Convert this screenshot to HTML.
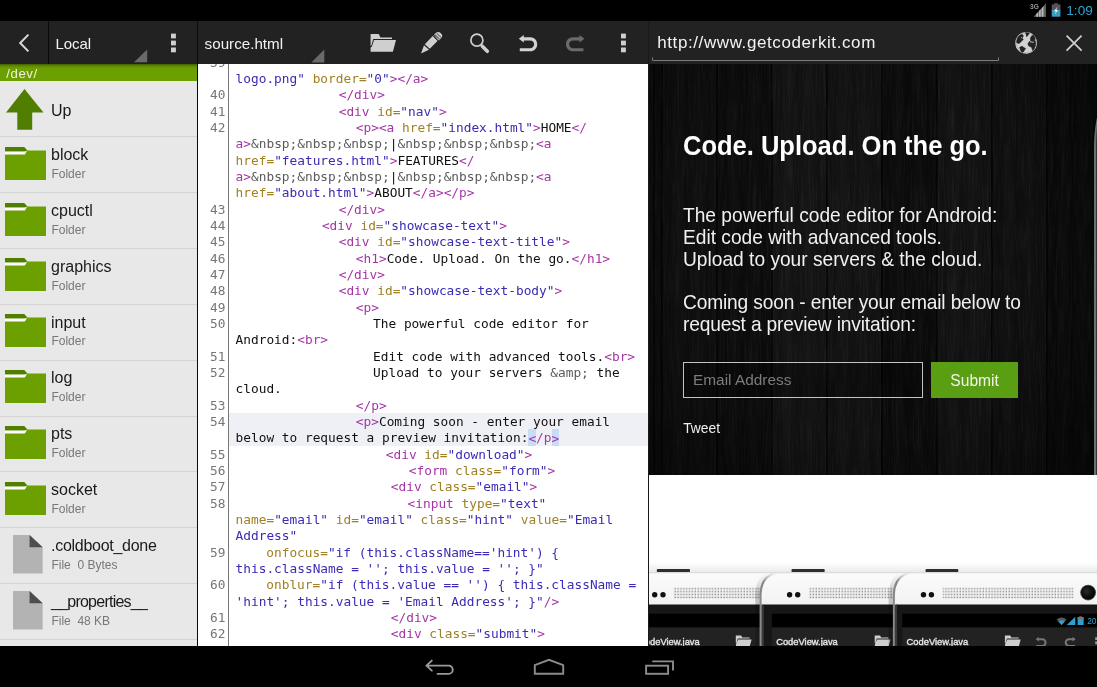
<!DOCTYPE html>
<html lang="en">
<head>
<meta charset="utf-8">
<title>CoderKit</title>
<style>
*{box-sizing:border-box;margin:0;padding:0}
html,body{width:1097px;height:687px;overflow:hidden;background:#000}
body{position:relative;font-family:"Liberation Sans",sans-serif;color:#fff}
.abs{position:absolute}
#status,.bar,#left,#code,#web,#nav{will-change:transform}
#status{position:absolute;left:0;top:0;width:1097px;height:21px;background:#000}
#clock{position:absolute;left:1066.3px;top:2.8px;font-size:13.6px;line-height:16px;color:#2fa4d4}
/* toolbars */
.bar{position:absolute;top:21px;height:43px;background:#222}
#bar1{left:0;width:197px}
#bar2{left:198px;width:450px}
#bar3{left:649px;width:448px}
.vdiv{position:absolute;top:21px;width:1px;background:#0a0a0a}
.title{position:absolute;font-size:15px;line-height:18px;color:#f2f2f2;white-space:nowrap}
/* left list */
#left{position:absolute;left:0;top:64px;width:197px;height:582px;background:#e8e8e8;overflow:hidden}
#path{position:absolute;left:0;top:0;width:197px;height:16.8px;background:#6c9f00;color:#eef3d8;font-size:13.2px;line-height:19px;padding-left:6.2px;letter-spacing:.6px}
.row{position:absolute;left:0;width:197px;height:55.83px;border-bottom:1px solid #d4d4d4;margin-top:-64px}
.row .ic{position:absolute;left:5px;top:9.3px}
.row .ic.up{left:6px;top:7.5px}
.row .ic.file{left:13.1px;top:7.2px}
.fn{position:absolute;left:51px;top:8.6px;font-size:16px;line-height:18px;color:#1a1a1a;white-space:nowrap}
.fn.single{top:20.6px}
.fs{position:absolute;left:51.4px;top:29.5px;font-size:12px;line-height:14px;color:#777;white-space:pre}
/* code */
#code{position:absolute;left:198px;top:64px;width:450px;height:582px;background:#fff;overflow:hidden}
#gutter{position:absolute;left:30px;top:0;width:1px;height:582px;background:#777}
.cl{position:absolute;left:0;width:450px;height:16.33px;margin-top:-64px;font-family:"DejaVu Sans Mono","Liberation Mono",monospace;font-size:12.8px;line-height:16.33px;white-space:pre;color:#111}
.cl.hlrow::before{content:"";position:absolute;left:31px;right:0;top:-1px;bottom:.6px;background:#eef0f5}
.ln{position:absolute;left:0;width:27.4px;text-align:right;color:#767676}
.ct{position:absolute;top:0}
.t{color:#a535a5}.a{color:#a08024}.s{color:#3a2cb4}.e{color:#5a5a5a}.x{color:#111}
.hl{background:#c8dbf7;padding:1.7px 0 1px}
/* web */
#web{position:absolute;left:649px;top:64px;width:448px;height:582px;background:#fff;overflow:hidden}
#hero{position:absolute;left:0;top:0;width:448px;height:411.4px;background:#131313;overflow:hidden}

#wood{position:absolute;inset:0;background:
 repeating-linear-gradient(90deg, rgba(0,0,0,.75) 0, rgba(0,0,0,.75) 1.2px, rgba(0,0,0,0) 2.5px, rgba(0,0,0,0) 55px),
 repeating-linear-gradient(90deg, rgba(255,255,255,.012) 0, rgba(255,255,255,0) 9px, rgba(255,255,255,.02) 17px, rgba(255,255,255,0) 26px, rgba(255,255,255,.015) 38px, rgba(255,255,255,0) 47px, rgba(255,255,255,.012) 55px),
 linear-gradient(90deg, #0c0c0c 0px, #0c0c0c 12px, #0e0e0e 12px, #0e0e0e 67px, #0b0b0b 67px, #0b0b0b 122px, #121212 122px, #121212 177px, #111111 177px, #111111 232px, #0a0a0a 232px, #0a0a0a 287px, #111111 287px, #111111 342px, #0e0e0e 342px, #0e0e0e 397px, #090909 397px, #090909 448px);
 background-position:12px 0, 12px 0, 0 0}
#vig{position:absolute;inset:0;background:radial-gradient(ellipse 70% 75% at 50% 45%, rgba(0,0,0,0) 0%, rgba(0,0,0,.1) 60%, rgba(0,0,0,.45) 100%)}
#edge{position:absolute;left:444.6px;top:45px;width:8px;height:380px;border-left:2.4px solid #6e6e6e;border-top-left-radius:8px 40px;background:#333}
#h1{left:34.2px;top:66px;font-size:28px;line-height:32px;font-weight:bold;color:#fff;white-space:nowrap;transform:scaleX(.911);transform-origin:0 0}
.hp{left:33.6px;font-size:19.8px;transform:scaleX(.969);transform-origin:0 0;line-height:22px;color:#f0f0f0;white-space:nowrap}
#email{left:34px;top:298.3px;width:240px;height:35.6px;border:1px solid #c4c4c4;background:rgba(0,0,0,.25);color:#7c7c7c;font-size:15.4px;line-height:33px;padding-left:9px}
#submit{left:281.8px;top:298px;width:87.6px;height:36.4px;background:#5a9e14;color:#f1f3e6;font-size:15.6px;line-height:37.6px;text-align:center}
#tweet{left:34.2px;top:357px;font-size:13.8px;line-height:16px;color:#f0f0f0}
#nav{position:absolute;left:0;top:646px;width:1097px;height:41px;background:#000}
</style>
</head>
<body>
<div id="status"><div id="clock">1:09</div></div>

<div class="bar" id="bar1">
  <div class="abs" style="left:48px;top:0;width:1px;height:43px;background:#0a0a0a"></div>
  <div class="title" style="left:55.6px;top:13.5px;letter-spacing:-0.1px">Local</div>
</div>
<div class="bar" id="bar2">
  <div class="title" style="left:6.6px;top:13.5px;font-size:15.2px">source.html</div>
</div>
<div class="bar" id="bar3">
  <div class="title" style="left:8.2px;top:12.7px;font-size:17px;letter-spacing:0.6px">http://www.getcoderkit.com</div>
</div>

<div id="left">
  <div id="path">/dev/</div>
<div class="row up" style="top:81.60px"><svg class="ic up" width="38" height="41" viewBox="0 0 38 41"><path d="M18.5 0L37.5 23.6H26.2V40.8H11.3V23.6H0Z" fill="#4f7e00"/></svg><div class="fn single">Up</div></div>
<div class="row folder" style="top:137.43px"><svg class="ic" width="41" height="33" viewBox="0 0 41 33"><path d="M0 0H19L22.5 3.6H41V33H0Z" fill="#6c9f00"/><path d="M0 0H19L22 3.2L19.5 4.6H0Z" fill="#4f7f00"/><path d="M0 4.6H19.5L22 3.9L19.8 7.5H0Z" fill="#fff"/></svg><div class="fn" style="letter-spacing:0px">block</div><div class="fs">Folder</div></div>
<div class="row folder" style="top:193.26px"><svg class="ic" width="41" height="33" viewBox="0 0 41 33"><path d="M0 0H19L22.5 3.6H41V33H0Z" fill="#6c9f00"/><path d="M0 0H19L22 3.2L19.5 4.6H0Z" fill="#4f7f00"/><path d="M0 4.6H19.5L22 3.9L19.8 7.5H0Z" fill="#fff"/></svg><div class="fn" style="letter-spacing:0px">cpuctl</div><div class="fs">Folder</div></div>
<div class="row folder" style="top:249.09px"><svg class="ic" width="41" height="33" viewBox="0 0 41 33"><path d="M0 0H19L22.5 3.6H41V33H0Z" fill="#6c9f00"/><path d="M0 0H19L22 3.2L19.5 4.6H0Z" fill="#4f7f00"/><path d="M0 4.6H19.5L22 3.9L19.8 7.5H0Z" fill="#fff"/></svg><div class="fn" style="letter-spacing:0px">graphics</div><div class="fs">Folder</div></div>
<div class="row folder" style="top:304.92px"><svg class="ic" width="41" height="33" viewBox="0 0 41 33"><path d="M0 0H19L22.5 3.6H41V33H0Z" fill="#6c9f00"/><path d="M0 0H19L22 3.2L19.5 4.6H0Z" fill="#4f7f00"/><path d="M0 4.6H19.5L22 3.9L19.8 7.5H0Z" fill="#fff"/></svg><div class="fn" style="letter-spacing:0px">input</div><div class="fs">Folder</div></div>
<div class="row folder" style="top:360.75px"><svg class="ic" width="41" height="33" viewBox="0 0 41 33"><path d="M0 0H19L22.5 3.6H41V33H0Z" fill="#6c9f00"/><path d="M0 0H19L22 3.2L19.5 4.6H0Z" fill="#4f7f00"/><path d="M0 4.6H19.5L22 3.9L19.8 7.5H0Z" fill="#fff"/></svg><div class="fn" style="letter-spacing:0px">log</div><div class="fs">Folder</div></div>
<div class="row folder" style="top:416.58px"><svg class="ic" width="41" height="33" viewBox="0 0 41 33"><path d="M0 0H19L22.5 3.6H41V33H0Z" fill="#6c9f00"/><path d="M0 0H19L22 3.2L19.5 4.6H0Z" fill="#4f7f00"/><path d="M0 4.6H19.5L22 3.9L19.8 7.5H0Z" fill="#fff"/></svg><div class="fn" style="letter-spacing:0px">pts</div><div class="fs">Folder</div></div>
<div class="row folder" style="top:472.41px"><svg class="ic" width="41" height="33" viewBox="0 0 41 33"><path d="M0 0H19L22.5 3.6H41V33H0Z" fill="#6c9f00"/><path d="M0 0H19L22 3.2L19.5 4.6H0Z" fill="#4f7f00"/><path d="M0 4.6H19.5L22 3.9L19.8 7.5H0Z" fill="#fff"/></svg><div class="fn" style="letter-spacing:0px">socket</div><div class="fs">Folder</div></div>
<div class="row file" style="top:528.24px"><svg class="ic file" width="29.7" height="38.4" viewBox="0 0 29.7 38.4"><path d="M0 0H16.6L29.7 12.2V38.4H0Z" fill="#b3b3b3"/><path d="M16.6 0L29.7 12.2H16.6Z" fill="#4d4d4d"/></svg><div class="fn" style="letter-spacing:-0.28px">.coldboot_done</div><div class="fs">File  0 Bytes</div></div>
<div class="row file" style="top:584.07px"><svg class="ic file" width="29.7" height="38.4" viewBox="0 0 29.7 38.4"><path d="M0 0H16.6L29.7 12.2V38.4H0Z" fill="#b3b3b3"/><path d="M16.6 0L29.7 12.2H16.6Z" fill="#4d4d4d"/></svg><div class="fn" style="letter-spacing:-0.76px">__properties__</div><div class="fs">File  48 KB</div></div>
</div>
<div class="abs" style="left:0;top:64px;width:648px;height:4px;background:linear-gradient(rgba(0,0,0,.4),rgba(0,0,0,.12) 50%,rgba(0,0,0,0))"></div>
<div class="vdiv" style="left:197px;height:625px"></div>

<div id="code">
<div class="cl" style="top:54.77px"><span class="ln">39</span><span class="ct" style="left:37.6px"></span></div>
<div class="cl" style="top:71.10px"><span class="ct" style="left:37.6px"><span class="s">logo.png"</span><span class="x"> </span><span class="a">border=</span><span class="s">"0"</span><span class="t">&gt;&lt;/a&gt;</span></span></div>
<div class="cl" style="top:87.43px"><span class="ln">40</span><span class="ct" style="left:140.7px"><span class="t">&lt;/div&gt;</span></span></div>
<div class="cl" style="top:103.76px"><span class="ln">41</span><span class="ct" style="left:140.7px"><span class="t">&lt;div</span><span class="x"> </span><span class="a">id=</span><span class="s">"nav"</span><span class="t">&gt;</span></span></div>
<div class="cl" style="top:120.09px"><span class="ln">42</span><span class="ct" style="left:157.8px"><span class="t">&lt;p&gt;&lt;a</span><span class="x"> </span><span class="a">href=</span><span class="s">"index.html"</span><span class="t">&gt;</span><span class="x">HOME</span><span class="t">&lt;/</span></span></div>
<div class="cl" style="top:136.42px"><span class="ct" style="left:37.6px"><span class="t">a&gt;</span><span class="e">&amp;nbsp;&amp;nbsp;&amp;nbsp;</span><span class="x">|</span><span class="e">&amp;nbsp;&amp;nbsp;&amp;nbsp;</span><span class="t">&lt;a</span></span></div>
<div class="cl" style="top:152.75px"><span class="ct" style="left:37.6px"><span class="a">href=</span><span class="s">"features.html"</span><span class="t">&gt;</span><span class="x">FEATURES</span><span class="t">&lt;/</span></span></div>
<div class="cl" style="top:169.08px"><span class="ct" style="left:37.6px"><span class="t">a&gt;</span><span class="e">&amp;nbsp;&amp;nbsp;&amp;nbsp;</span><span class="x">|</span><span class="e">&amp;nbsp;&amp;nbsp;&amp;nbsp;</span><span class="t">&lt;a</span></span></div>
<div class="cl" style="top:185.41px"><span class="ct" style="left:37.6px"><span class="a">href=</span><span class="s">"about.html"</span><span class="t">&gt;</span><span class="x">ABOUT</span><span class="t">&lt;/a&gt;&lt;/p&gt;</span></span></div>
<div class="cl" style="top:201.74px"><span class="ln">43</span><span class="ct" style="left:140.7px"><span class="t">&lt;/div&gt;</span></span></div>
<div class="cl" style="top:218.07px"><span class="ln">44</span><span class="ct" style="left:123.9px"><span class="t">&lt;div</span><span class="x"> </span><span class="a">id=</span><span class="s">"showcase-text"</span><span class="t">&gt;</span></span></div>
<div class="cl" style="top:234.40px"><span class="ln">45</span><span class="ct" style="left:140.7px"><span class="t">&lt;div</span><span class="x"> </span><span class="a">id=</span><span class="s">"showcase-text-title"</span><span class="t">&gt;</span></span></div>
<div class="cl" style="top:250.73px"><span class="ln">46</span><span class="ct" style="left:157.8px"><span class="t">&lt;h1&gt;</span><span class="x">Code. Upload. On the go.</span><span class="t">&lt;/h1&gt;</span></span></div>
<div class="cl" style="top:267.06px"><span class="ln">47</span><span class="ct" style="left:140.7px"><span class="t">&lt;/div&gt;</span></span></div>
<div class="cl" style="top:283.39px"><span class="ln">48</span><span class="ct" style="left:140.7px"><span class="t">&lt;div</span><span class="x"> </span><span class="a">id=</span><span class="s">"showcase-text-body"</span><span class="t">&gt;</span></span></div>
<div class="cl" style="top:299.72px"><span class="ln">49</span><span class="ct" style="left:157.8px"><span class="t">&lt;p&gt;</span></span></div>
<div class="cl" style="top:316.05px"><span class="ln">50</span><span class="ct" style="left:175.1px"><span class="x">The powerful code editor for</span></span></div>
<div class="cl" style="top:332.38px"><span class="ct" style="left:37.6px"><span class="x">Android:</span><span class="t">&lt;br&gt;</span></span></div>
<div class="cl" style="top:348.71px"><span class="ln">51</span><span class="ct" style="left:175.1px"><span class="x">Edit code with advanced tools.</span><span class="t">&lt;br&gt;</span></span></div>
<div class="cl" style="top:365.04px"><span class="ln">52</span><span class="ct" style="left:175.1px"><span class="x">Upload to your servers </span><span class="e">&amp;amp;</span><span class="x"> the</span></span></div>
<div class="cl" style="top:381.37px"><span class="ct" style="left:37.6px"><span class="x">cloud.</span></span></div>
<div class="cl" style="top:397.70px"><span class="ln">53</span><span class="ct" style="left:157.8px"><span class="t">&lt;/p&gt;</span></span></div>
<div class="cl hlrow" style="top:414.03px"><span class="ln">54</span><span class="ct" style="left:157.8px"><span class="t">&lt;p&gt;</span><span class="x">Coming soon - enter your email</span></span></div>
<div class="cl hlrow" style="top:430.36px"><span class="ct" style="left:37.6px"><span class="x">below to request a preview invitation:</span><span class="t hl">&lt;</span><span class="t">/p</span><span class="t hl">&gt;</span></span></div>
<div class="cl" style="top:446.69px"><span class="ln">55</span><span class="ct" style="left:187.8px"><span class="t">&lt;div</span><span class="x"> </span><span class="a">id=</span><span class="s">"download"</span><span class="t">&gt;</span></span></div>
<div class="cl" style="top:463.02px"><span class="ln">56</span><span class="ct" style="left:210.8px"><span class="t">&lt;form</span><span class="x"> </span><span class="a">class=</span><span class="s">"form"</span><span class="t">&gt;</span></span></div>
<div class="cl" style="top:479.35px"><span class="ln">57</span><span class="ct" style="left:192.8px"><span class="t">&lt;div</span><span class="x"> </span><span class="a">class=</span><span class="s">"email"</span><span class="t">&gt;</span></span></div>
<div class="cl" style="top:495.68px"><span class="ln">58</span><span class="ct" style="left:209.6px"><span class="t">&lt;input</span><span class="x"> </span><span class="a">type=</span><span class="s">"text"</span></span></div>
<div class="cl" style="top:512.01px"><span class="ct" style="left:37.6px"><span class="a">name=</span><span class="s">"email"</span><span class="x"> </span><span class="a">id=</span><span class="s">"email"</span><span class="x"> </span><span class="a">class=</span><span class="s">"hint"</span><span class="x"> </span><span class="a">value=</span><span class="s">"Email</span></span></div>
<div class="cl" style="top:528.34px"><span class="ct" style="left:37.6px"><span class="s">Address"</span></span></div>
<div class="cl" style="top:544.67px"><span class="ln">59</span><span class="ct" style="left:68.3px"><span class="a">onfocus=</span><span class="s">"if (this.className=='hint') {</span></span></div>
<div class="cl" style="top:561.00px"><span class="ct" style="left:37.6px"><span class="s">this.className = ''; this.value = ''; }"</span></span></div>
<div class="cl" style="top:577.33px"><span class="ln">60</span><span class="ct" style="left:68.3px"><span class="a">onblur=</span><span class="s">"if (this.value == '') { this.className =</span></span></div>
<div class="cl" style="top:593.66px"><span class="ct" style="left:37.6px"><span class="s">'hint'; this.value = 'Email Address'; }"</span><span class="t">/&gt;</span></span></div>
<div class="cl" style="top:609.99px"><span class="ln">61</span><span class="ct" style="left:192.8px"><span class="t">&lt;/div&gt;</span></span></div>
<div class="cl" style="top:626.32px"><span class="ln">62</span><span class="ct" style="left:192.8px"><span class="t">&lt;div</span><span class="x"> </span><span class="a">class=</span><span class="s">"submit"</span><span class="t">&gt;</span></span></div>
  <div id="gutter"></div>
</div>
<div class="vdiv" style="left:648px;height:625px;background:#1a1a1a"></div>

<div id="web">
  <div id="hero">
    <div id="wood"></div>
    <svg class="abs" style="left:0;top:0" width="448" height="412"><filter id="wg" x="0" y="0" width="100%" height="100%"><feTurbulence type="fractalNoise" baseFrequency="0.55 0.025" numOctaves="4" seed="7"/><feColorMatrix values="0 0 0 0 1  0 0 0 0 1  0 0 0 0 1  1.9 0 0 0 -0.8"/></filter><rect width="448" height="412" filter="url(#wg)" opacity=".055"/></svg>
    <div id="vig"></div>
    <div id="edge"></div>
    <h1 class="abs" id="h1">Code. Upload. On the go.</h1>
    <p class="abs hp" style="top:140.3px">The powerful code editor for Android:<br>Edit code with advanced tools.<br>Upload to your servers &amp; the cloud.</p>
    <p class="abs hp" style="top:226.7px;letter-spacing:-0.17px">Coming soon - enter your email below to<br>request a preview invitation:</p>
    <div class="abs" id="email"><span>Email Address</span></div>
    <div class="abs" id="submit">Submit</div>
    <div class="abs" id="tweet">Tweet</div>
  </div>
<svg class="abs" style="left:0;top:486px" width="448" height="96" viewBox="649 550 448 96">
<defs>
<linearGradient id="pb" x1="0" y1="0" x2="0" y2="1"><stop offset="0" stop-color="#fbfbfb"/><stop offset=".5" stop-color="#f1f1f1"/><stop offset="1" stop-color="#e4e4e4"/></linearGradient>
<linearGradient id="sh" x1="0" y1="0" x2="0" y2="1"><stop offset="0" stop-color="#fff"/><stop offset="1" stop-color="#e9e9e9"/></linearGradient>
<linearGradient id="ls" x1="0" y1="0" x2="1" y2="0"><stop offset="0" stop-color="#000" stop-opacity="0"/><stop offset="1" stop-color="#000" stop-opacity=".35"/></linearGradient>
<linearGradient id="ed" x1="0" y1="0" x2="1" y2="0"><stop offset="0" stop-color="#8a8a8a"/><stop offset=".5" stop-color="#c8c8c8"/><stop offset="1" stop-color="#555"/></linearGradient>
<pattern id="gr" x="0" y="587.4" width="2.88" height="2.9" patternUnits="userSpaceOnUse"><rect x=".5" y=".6" width="1.5" height="1.5" fill="#8e8e8e"/></pattern>
<linearGradient id="eg" gradientUnits="userSpaceOnUse" x1="0" y1="572" x2="0" y2="600"><stop offset="0" stop-color="#9a9a9a" stop-opacity="0"/><stop offset=".35" stop-color="#777" stop-opacity=".9"/><stop offset="1" stop-color="#8a8a8a"/></linearGradient>
<linearGradient id="sg" gradientUnits="userSpaceOnUse" x1="0" y1="573" x2="0" y2="596"><stop offset="0" stop-color="#000" stop-opacity="0"/><stop offset="1" stop-color="#000" stop-opacity=".2"/></linearGradient>
<radialGradient id="cam" cx=".4" cy=".4" r=".7"><stop offset="0" stop-color="#2a2a2a"/><stop offset=".6" stop-color="#0a0a0a"/><stop offset="1" stop-color="#000"/></radialGradient>
</defs>
<rect x="649" y="562" width="448" height="11" fill="url(#sh)"/>
<path d="M623.8 646V594Q624.8 572.4 646.0 572.4" fill="none" stroke="url(#sg)" stroke-width="5"/>
<rect x="656.8" y="569" width="33.2" height="3.2" rx="1" fill="#2e2e2e"/>
<path d="M626.0 646V594Q627.0 572.4 648.0 572.4H1200V646Z" fill="url(#pb)"/>
<path d="M626.6 646V594Q627.6 572.4 648.0 572.4" fill="none" stroke="url(#eg)" stroke-width="2"/>
<path d="M646.0 572.6H1200" stroke="#dcdcdc" stroke-width="1.2"/>
<path d="M628.6 604.6H1200V646H628.6Z" fill="#171717"/>
<rect x="627.4" y="604.6" width="2.4" height="42" fill="#3a3a3a"/>
<rect x="638.0" y="613.7" width="600" height="13.8" fill="#000"/>
<rect x="638.0" y="627.5" width="600" height="19" fill="#222"/>
<circle cx="654.7" cy="594.8" r="2.7" fill="#111"/>
<circle cx="663.0" cy="594.8" r="2.7" fill="#111"/>
<rect x="673.5" y="587.4" width="131.0" height="11.5" fill="url(#gr)"/>
<text x="638.1" y="644.6" font-family="Liberation Sans, sans-serif" font-size="9.4" fill="#e6e6e6" stroke="#e6e6e6" stroke-width=".35" textLength="61.6" lengthAdjust="spacingAndGlyphs">CodeView.java</text>
<path d="M735.8 635.4h5.4l1 2.2h7.4v1h-11.8l-1.2 4.2-.8.4z M738.2 639.4h13.4l-2 7.4h-13.6v-2.6z" fill="#cfcfcf"/>
<path d="M757.8 646V594Q758.8 572.4 780.0 572.4" fill="none" stroke="url(#sg)" stroke-width="5"/>
<rect x="791.5" y="569" width="33.2" height="3.2" rx="1" fill="#2e2e2e"/>
<path d="M760.0 646V594Q761.0 572.4 782.0 572.4H1200V646Z" fill="url(#pb)"/>
<path d="M760.6 646V594Q761.6 572.4 782.0 572.4" fill="none" stroke="url(#eg)" stroke-width="2"/>
<path d="M780.0 572.6H1200" stroke="#dcdcdc" stroke-width="1.2"/>
<path d="M762.6 604.6H1200V646H762.6Z" fill="#171717"/>
<rect x="761.4" y="604.6" width="2.4" height="42" fill="#3a3a3a"/>
<rect x="771.9" y="613.7" width="600" height="13.8" fill="#000"/>
<rect x="771.9" y="627.5" width="600" height="19" fill="#222"/>
<circle cx="789.6" cy="594.8" r="2.7" fill="#111"/>
<circle cx="797.7" cy="594.8" r="2.7" fill="#111"/>
<rect x="809.0" y="587.4" width="131.0" height="11.5" fill="url(#gr)"/>
<text x="776.2" y="644.6" font-family="Liberation Sans, sans-serif" font-size="9.4" fill="#e6e6e6" stroke="#e6e6e6" stroke-width=".35" textLength="61.6" lengthAdjust="spacingAndGlyphs">CodeView.java</text>
<path d="M874.7 635.4h5.4l1 2.2h7.4v1h-11.8l-1.2 4.2-.8.4z M877.1 639.4h13.4l-2 7.4h-13.6v-2.6z" fill="#cfcfcf"/>
<path d="M891.1 646V594Q892.1 572.4 913.3 572.4" fill="none" stroke="url(#sg)" stroke-width="5"/>
<rect x="925.5" y="569" width="32.8" height="3.2" rx="1" fill="#2e2e2e"/>
<path d="M893.3 646V594Q894.3 572.4 915.3 572.4H1200V646Z" fill="url(#pb)"/>
<path d="M893.9 646V594Q894.9 572.4 915.3 572.4" fill="none" stroke="url(#eg)" stroke-width="2"/>
<path d="M913.3 572.6H1200" stroke="#dcdcdc" stroke-width="1.2"/>
<path d="M895.9 604.6H1200V646H895.9Z" fill="#171717"/>
<rect x="894.7" y="604.6" width="2.4" height="42" fill="#3a3a3a"/>
<rect x="902.3" y="613.7" width="600" height="13.8" fill="#000"/>
<rect x="902.3" y="627.5" width="600" height="19" fill="#222"/>
<circle cx="923.5" cy="594.8" r="2.7" fill="#111"/>
<circle cx="931.4" cy="594.8" r="2.7" fill="#111"/>
<rect x="942.7" y="587.4" width="130.9" height="11.5" fill="url(#gr)"/>
<text x="906.6" y="644.6" font-family="Liberation Sans, sans-serif" font-size="9.4" fill="#e6e6e6" stroke="#e6e6e6" stroke-width=".35" textLength="61.6" lengthAdjust="spacingAndGlyphs">CodeView.java</text>
<path d="M1004.9 635.4h5.4l1 2.2h7.4v1h-11.8l-1.2 4.2-.8.4z M1007.3 639.4h13.4l-2 7.4h-13.6v-2.6z" fill="#cfcfcf"/>
<circle cx="1088.1" cy="592.6" r="7.4" fill="url(#cam)"/>
<circle cx="1088.1" cy="592.6" r="7.4" fill="none" stroke="#333" stroke-width=".8"/>
<path d="M1061.6 625L1056.6 619.4Q1061.6 615.6 1066.6 619.4Z" fill="#5a5a5a"/>
<path d="M1061.6 625L1058.4 621.4Q1061.6 619 1064.8 621.4Z" fill="#2d9fd0"/>
<path d="M1066.8 625H1075.3V616.8Z" fill="#2d9fd0"/>
<rect x="1077.6" y="617.2" width="6" height="7.8" fill="#2d9fd0"/><rect x="1079.2" y="616.4" width="2.8" height="1.2" fill="#777"/><rect x="1077.6" y="617.2" width="6" height="2.4" fill="#777"/>
<text x="1087.2" y="624.4" font-family="Liberation Sans, sans-serif" font-size="8.4" fill="#2d9fd0">20</text>
<path d="M1035.7 639.2l3-2.4v1.5h3.6a4.3 4.3 0 0 1 0 8.6h-6v-1.9h5.9a2.4 2.4 0 0 0 0-4.8h-3.5v1.4z" fill="#777"/>
<path d="M1075.6 639.2l-3-2.4v1.5h-3.6a4.3 4.3 0 0 0 0 8.6h6v-1.9h-5.9a2.4 2.4 0 0 1 0-4.8h3.5v1.4z" fill="#777"/>
<rect x="1095.2" y="637.2" width="2" height="2.8" fill="#999"/><rect x="1095.2" y="641.4" width="2" height="2.8" fill="#999"/>
</svg>
</div>

<div id="nav"></div>
<svg class="abs" style="left:0;top:646px" width="1097" height="41" viewBox="0 646 1097 41">
  <g fill="none" stroke="#9a9a9a" stroke-width="1.9">
    <path d="M431.8 660.6L426.4 665.6L431.8 670.6M426.6 665.6H448.6A4.15 4.15 0 0 1 448.6 673.9H437.6" stroke-linecap="round" stroke-linejoin="round"/>
    <path d="M534.8 673.8V665.2L549 659.8L563.2 665.2V673.8Z" stroke="#8c8c8c"/>
    <rect x="646.1" y="665.7" width="22" height="8.1" stroke="#8c8c8c"/>
    <path d="M652.2 661.4H673V670.6" stroke="#8c8c8c"/>
  </g>
</svg>

<svg id="tb" class="abs" style="left:0;top:0" width="1097" height="64" viewBox="0 0 1097 64">
  <!-- status icons -->
  <text x="1030" y="9.3" font-family="Liberation Sans, sans-serif" font-weight="bold" font-size="6.6" fill="#9a9a9a">3G</text>
  <g fill="#8a8a8a">
    <path d="M1033.7 16.8L1046 3.4V16.8Z" fill="#6f6f6f"/>
    <path d="M1036.3 14V16.8H1038V12.2Z M1039 11.1V16.8H1040.7V9.3Z M1041.7 8.2V16.8H1043.4V6.3Z" fill="#b5b5b5"/>
    <path d="M1044.4 5.2V16.8H1046V3.4Z" fill="#5a5a5a"/>
  </g>
  <rect x="1054" y="3.2" width="4" height="1.5" fill="#555"/>
  <rect x="1051.7" y="4.4" width="8.7" height="5.4" fill="#555"/>
  <rect x="1051.7" y="9.6" width="8.7" height="7.1" fill="#3a9dc6"/>
  <path d="M1057.3 6.8L1054.2 11.2H1056L1054.8 14.6L1058 10H1056.2Z" fill="#fff"/>
  <!-- back chevron -->
  <path d="M28.4 34.6L20.2 43L28.4 51.4" fill="none" stroke="#d8d8d8" stroke-width="2"/>
  <!-- spinner triangles -->
  <path d="M134 62.3H147.2V49.4Z" fill="#6a6a6a"/>
  <path d="M311.3 62.5H324.3V49.5Z" fill="#6a6a6a"/>
  <!-- overflow dots -->
  <g fill="#cfcfcf">
    <rect x="171" y="33.6" width="4.9" height="4.8"/><rect x="171" y="40.6" width="4.9" height="4.8"/><rect x="171" y="47.5" width="4.9" height="4.8"/>
    <rect x="621" y="33.6" width="4.9" height="4.8"/><rect x="621" y="40.6" width="4.9" height="4.8"/><rect x="621" y="47.5" width="4.9" height="4.8"/>
  </g>
  <!-- folder -->
  <g fill="#cfcfcf">
    <path d="M370.6 34H378.8L380.4 37.6H392V39H373.2L371.4 45.6L370.6 46Z"/>
    <path d="M374 40H396L392.9 51.7H370.6V47.5L371.9 46.4Z"/>
  </g>
  <!-- pencil -->
  <g fill="#cfcfcf">
    <path d="M421 53.6L424 45.2L429 49.7Z"/>
    <path d="M424.8 44.2L433.2 35.6L438.2 40.2L429.8 48.8Z"/>
    <path d="M434 34.8L436.2 32.6Q438.5 31 440.8 33.2Q443.4 35.6 441.4 37.8L439 40.4Z" />
  </g>
  <g stroke="#222" stroke-width="0.9" fill="none">
    <path d="M433.2 36.2L437.9 40.9M434.9 34.6L439.7 39.2M436.6 33.1L441.2 37.6"/>
  </g>
  <!-- search -->
  <circle cx="476.9" cy="40.2" r="6" fill="none" stroke="#cfcfcf" stroke-width="1.7"/>
  <path d="M482.3 46.2L487.3 51.3" stroke="#cfcfcf" stroke-width="3.6" stroke-linecap="round" fill="none"/>
  <!-- undo -->
  <g fill="#d2d2d2">
    <path d="M518.8 38.7L523.8 34.9V37.3H530.2C534.4 37.3 537.2 40.4 537.2 44.2C537.2 48.4 534.2 51.3 530.2 51.3H519.8V48.3H530C532.4 48.3 534.1 46.6 534.1 44.3C534.1 42 532.4 40.4 530 40.4H523.8V42.4Z"/>
  </g>
  <!-- redo -->
  <g fill="#6a6a6a">
    <path d="M584.4 38.7L579.4 34.9V37.3H573C568.8 37.3 566 40.4 566 44.2C566 48.4 569 51.3 573 51.3H583.4V48.3H573.2C570.8 48.3 569.1 46.6 569.1 44.3C569.1 42 570.8 40.4 573.2 40.4H579.4V42.4Z"/>
  </g>
  <!-- url underline -->
  <path d="M652.5 57.5V60.5H998.5V57.5" fill="none" stroke="#7c7c7c" stroke-width="1"/>
  <!-- globe -->
  <circle cx="1026.1" cy="42.9" r="10.8" fill="#d2d2d2"/>
  <circle cx="1026.1" cy="42.9" r="9.9" fill="none" stroke="#9a9a9a" stroke-width="0.5"/>
  <g fill="#222" stroke="#222" stroke-width=".5" stroke-linejoin="round" transform="translate(1026.1 42.9) scale(1.13) translate(-1026.1 -42.9)">
    <path d="M1017.6 42.4L1018.4 38.5L1020.4 36.1L1022.6 35.2L1023.7 36.7L1022.6 38.9L1023.7 39.8L1021.9 41.5L1020.4 43.1L1019.1 43.5Z"/>
    <path d="M1025.6 33.7L1028.9 34.1L1027.8 36.3L1026.5 37.4L1026.1 35.4Z"/>
    <path d="M1030.9 36.7L1032.4 35.9L1034.1 38.5L1033.7 40.7L1034.6 42.4L1034.4 45.5L1033.1 48.5L1032 49.8L1030.9 46.8L1028.2 45.5L1027.8 43.3L1029.3 41.5L1030.2 40.7L1029.8 38.9Z"/>
    <path d="M1020.4 46.8L1022.4 45.9L1025.6 47.9L1024.1 50.3L1022.6 51.4L1021.3 49.8Z"/>
  </g>
  <path d="M1030 41.8L1033.8 42.3M1021 38.2L1021.8 37.2" stroke="#d2d2d2" stroke-width="0.9" fill="none"/>
  <!-- close X -->
  <path d="M1066.6 35.6L1081.6 50.6M1081.6 35.6L1066.6 50.6" stroke="#cfcfcf" stroke-width="1.7" fill="none"/>
</svg>

</body>
</html>
